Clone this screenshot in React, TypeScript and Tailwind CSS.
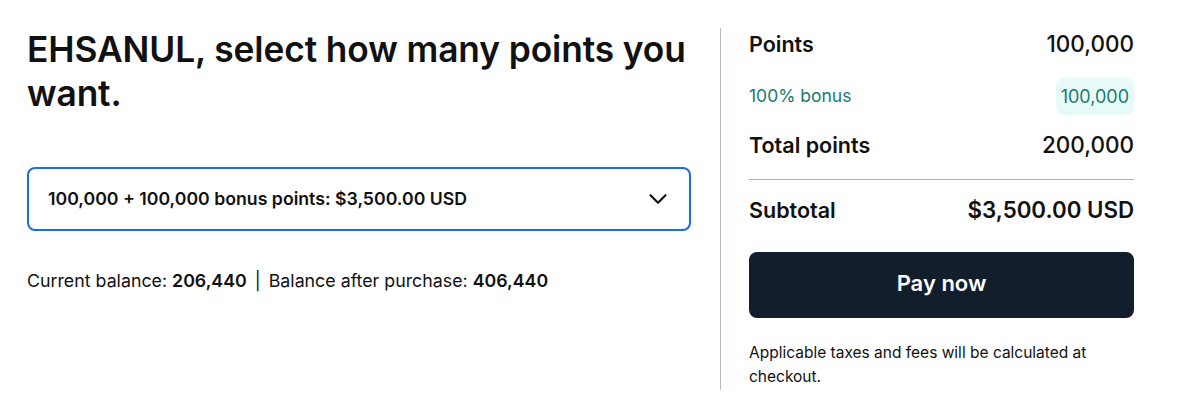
import { ChevronDown } from 'lucide-react';

const font = { fontFamily: 'Inter, "Noto Sans", sans-serif' };

export default function App() {
  return (
    <main className="h-[418px] w-[1200px] bg-white text-[#111111]" style={font}>
      <div className="flex px-[27px] pt-[28px]">
        {/* Left: selection */}
        <section className="w-[664px]">
          <h1 className="w-[684px] text-[35.3px] font-semibold leading-[44px] tracking-[-0.1px]">
            EHSANUL, select how many points you want.
          </h1>
          <button className="mt-[51px] flex h-[64px] w-[664px] items-center justify-between rounded-[8px] border-2 border-[#1a6fd8] pl-[19px] pr-[16px] text-left">
            <span className="text-[17.7px] font-semibold">100,000 + 100,000 bonus points: $3,500.00 USD</span>
            <ChevronDown className="h-[30px] w-[30px]" strokeWidth={1.7} />
          </button>
          <p className="mt-[37px] text-[17.8px] leading-[26px]">
            Current balance: <span className="font-semibold">206,440</span>
            <span className="mx-[8px]">|</span>
            Balance after purchase: <span className="font-semibold">406,440</span>
          </p>
        </section>

        <div className="ml-[29px] h-[362px] w-px bg-[#b3bccb]" />

        {/* Right: summary */}
        <aside className="ml-[28px] w-[385px]">
          <div className="flex h-[32px] items-center justify-between text-[21.5px] font-semibold">
            <span>Points</span>
            <span className="text-[22.5px] font-medium">100,000</span>
          </div>
          <div className="mt-[18px] flex items-center justify-between text-[17.5px] text-[#1b7a6d]">
            <span>100% bonus</span>
            <span className="rounded-[8px] bg-[#e7faf8] px-[5px] py-[8px] text-[18px] leading-[21px]">100,000</span>
          </div>
          <div className="mt-[14px] flex h-[32px] items-center justify-between text-[21.5px] font-semibold">
            <span>Total points</span>
            <span className="text-[22.5px] font-medium">200,000</span>
          </div>
          <div className="mt-[18px] h-px bg-[#a9b1c1]" />
          <div className="mt-[14px] flex h-[32px] items-center justify-between text-[21.5px] font-semibold">
            <span>Subtotal</span>
            <span className="text-[22.3px]">$3,500.00 USD</span>
          </div>
          <button className="mt-[26px] flex h-[66px] w-full items-center justify-center rounded-[8px] bg-[#131e2d] pb-[3px] text-[22px] font-semibold text-white">
            Pay now
          </button>
          <p className="mt-[23px] text-[15.5px] leading-[24px]">
            Applicable taxes and fees will be calculated at checkout.
          </p>
        </aside>
      </div>
    </main>
  );
}
